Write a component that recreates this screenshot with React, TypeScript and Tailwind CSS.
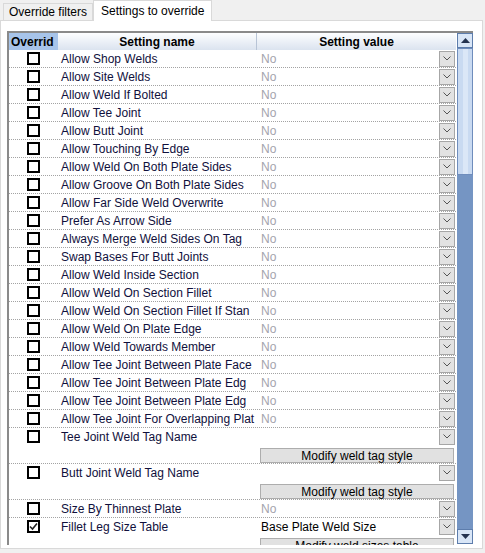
import React from "react"

type Setting = {
  name: string
  value?: string
  checked?: boolean
  action?: string
}

const settings: Setting[] = [
  { name: "Allow Shop Welds", value: "No" },
  { name: "Allow Site Welds", value: "No" },
  { name: "Allow Weld If Bolted", value: "No" },
  { name: "Allow Tee Joint", value: "No" },
  { name: "Allow Butt Joint", value: "No" },
  { name: "Allow Touching By Edge", value: "No" },
  { name: "Allow Weld On Both Plate Sides", value: "No" },
  { name: "Allow Groove On Both Plate Sides", value: "No" },
  { name: "Allow Far Side Weld Overwrite", value: "No" },
  { name: "Prefer As Arrow Side", value: "No" },
  { name: "Always Merge Weld Sides On Tag", value: "No" },
  { name: "Swap Bases For Butt Joints", value: "No" },
  { name: "Allow Weld Inside Section", value: "No" },
  { name: "Allow Weld On Section Fillet", value: "No" },
  { name: "Allow Weld On Section Fillet If Stan", value: "No" },
  { name: "Allow Weld On Plate Edge", value: "No" },
  { name: "Allow Weld Towards Member", value: "No" },
  { name: "Allow Tee Joint Between Plate Face", value: "No" },
  { name: "Allow Tee Joint Between Plate Edg", value: "No" },
  { name: "Allow Tee Joint Between Plate Edg", value: "No" },
  { name: "Allow Tee Joint For Overlapping Plat", value: "No" },
  { name: "Tee Joint Weld Tag Name", action: "Modify weld tag style" },
  { name: "Butt Joint Weld Tag Name", action: "Modify weld tag style" },
  { name: "Size By Thinnest Plate", value: "No" },
  { name: "Fillet Leg Size Table", value: "Base Plate Weld Size", checked: true, action: "Modify weld sizes table" },
]

const CheckBox = ({ checked }: { checked?: boolean }) => (
  <span className="w-[13px] h-[13px] border-2 border-black bg-white flex items-center justify-center">
    {checked && (
      <svg width="9" height="9" viewBox="0 0 9 9">
        <path d="M1 4.5 L3.5 7 L8 1.5" fill="none" stroke="#222" strokeWidth="1.6" />
      </svg>
    )}
  </span>
)

const DropButton = () => (
  <span className="w-[16px] h-[16px] bg-[#e2e2e2] border border-[#a6a6a6] flex items-center justify-center shrink-0">
    <svg width="8" height="5" viewBox="0 0 8 5">
      <path d="M0.5 0.5 L4 4 L7.5 0.5" fill="none" stroke="#555" strokeWidth="1" />
    </svg>
  </span>
)

const SettingRow = ({ s }: { s: Setting }) => (
  <div className="flex border-b border-dotted border-[#a3a3a3] shrink-0">
    <div className="w-[49px] h-[17px] flex items-center justify-center shrink-0">
      <CheckBox checked={s.checked} />
    </div>
    <div className="w-[199px] h-[17px] pl-[3px] flex items-center overflow-hidden whitespace-nowrap shrink-0 text-[#10103c]">
      {s.name}
    </div>
    <div className="w-[199px] flex flex-col shrink-0">
      <div className="h-[17px] pl-[4px] pr-[1px] flex items-center justify-between">
        <span className={s.value === "No" ? "text-[#a4a4ad]" : "text-black"}>{s.value}</span>
        <DropButton />
      </div>
      {s.action && (
        <div className="h-[18px] pl-[3px] pr-[2px] pt-[3px]">
          <div className="h-[15px] bg-[#e1e1e1] border border-[#adadad] flex items-center justify-center text-black leading-none">
            {s.action}
          </div>
        </div>
      )}
    </div>
  </div>
)

const ScrollArrow = ({ up }: { up?: boolean }) => (
  <div className="h-[15px] bg-[#d9e6f7] border border-[#5d7dac] flex items-center justify-center shrink-0">
    <svg width="9" height="5" viewBox="0 0 9 5">
      <path d={up ? "M0 5 L4.5 0 L9 5 Z" : "M0 0 L4.5 5 L9 0 Z"} fill="#243350" />
    </svg>
  </div>
)

export default function App() {
  return (
    <div
      className="w-[485px] h-[553px] bg-[#f0f0f0] text-[12px] text-black overflow-hidden"
      style={{ fontFamily: "'Liberation Sans', Arial, sans-serif" }}
    >
      {/* tab strip */}
      <div className="flex items-end h-[20px] pl-[3px]">
        <div className="h-[17px] px-[5px] border border-b-0 border-[#d9d9d9] bg-[#f0f0f0] flex items-center leading-none">
          Override filters
        </div>
        <div className="h-[21px] -mb-[1px] px-[7px] border border-b-0 border-[#d9d9d9] bg-white flex items-center leading-none relative">
          Settings to override
        </div>
      </div>

      {/* tab page */}
      <div className="w-[483px] h-[529px] border border-[#d9d9d9] bg-white pl-[6px] pt-[10px]">
        <div className="w-[466px] h-[514px] border-l-2 border-t-2 border-[#8a8a8a] flex overflow-hidden">
          <div className="w-[447px] flex flex-col overflow-hidden">
            {/* header */}
            <div className="h-[17px] flex shrink-0 font-bold leading-none">
              <div className="w-[49px] bg-[#a7c4ea] pl-[2px] flex items-center overflow-hidden whitespace-nowrap shrink-0">
                Overrid
              </div>
              <div className="w-[199px] bg-gradient-to-b from-[#fdfeff] to-[#dbe3ef] border-r border-[#b8c4d6] flex items-center justify-center shrink-0">
                Setting name
              </div>
              <div className="w-[199px] bg-gradient-to-b from-[#fdfeff] to-[#dbe3ef] flex items-center justify-center shrink-0">
                Setting value
              </div>
            </div>
            {settings.map((s, i) => (
              <SettingRow key={i} s={s} />
            ))}
          </div>

          {/* vertical scroll bar */}
          <div className="w-[17px] pl-[1px] flex flex-col bg-white">
            <ScrollArrow up />
            <div className="h-[127px] bg-[#c9daf1] border border-[#6f8dbc] flex justify-center shrink-0">
              <div className="w-[5px] h-full bg-[#dbe7f7]" />
            </div>
            <div className="flex-1 bg-[#7595c3]" />
            <ScrollArrow />
            <div className="h-[1px]" />
          </div>
        </div>
      </div>
    </div>
  )
}
